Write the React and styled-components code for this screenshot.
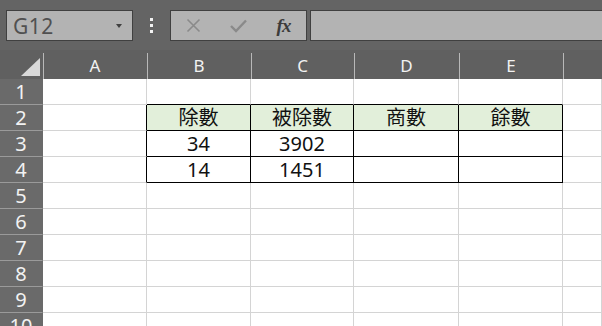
import React from "react";
import styled, { createGlobalStyle } from "styled-components";

const GlobalStyle = createGlobalStyle`
  html, body {
    margin: 0;
    padding: 0;
    background: #646464;
    overflow: hidden;
  }
`;

const COLS = ["A", "B", "C", "D", "E", ""];
const WIDTHS = "43px 104px 104px 103px 105px 104px 1fr";

const rows = [
  [],
  ["", "除數", "被除數", "商數", "餘數"],
  ["", "34", "3902", "", ""],
  ["", "14", "1451", "", ""],
  [], [], [], [], [], [],
];

const Page = styled.div`
  width: 602px;
  height: 326px;
  overflow: hidden;
  background: #646464;
  font-family: "Noto Sans", "Noto Sans CJK TC", sans-serif;
`;

const Toolbar = styled.div`
  height: 50px;
  display: flex;
  align-items: flex-start;
  padding: 10px 0 0 6px;
  box-sizing: border-box;
`;

const Box = styled.div`
  height: 31px;
  box-sizing: border-box;
  background: #b3b3b3;
  border: 1px solid #404040;
  display: flex;
  align-items: center;
`;

const NameBox = styled(Box)`
  width: 127px;
  padding: 0 10px 0 6px;
  justify-content: space-between;
  font-size: 21px;
  letter-spacing: 0.5px;
  color: #505050;
`;

const Caret = styled.span`
  width: 0;
  height: 0;
  border-left: 3.5px solid transparent;
  border-right: 3.5px solid transparent;
  border-top: 4px solid #404040;
`;

const Dots = styled.div`
  width: 37px;
  height: 31px;
  display: flex;
  flex-direction: column;
  align-items: center;
  justify-content: center;
  gap: 3px;
  span {
    width: 3px;
    height: 3px;
    background: #f2f2f2;
  }
`;

const FxBox = styled(Box)`
  width: 137px;
  padding: 0;
`;

const FxButton = styled.div`
  width: 45px;
  display: flex;
  justify-content: center;
  align-items: center;
`;

const FxLabel = styled.span`
  font-family: "Liberation Serif", serif;
  font-style: italic;
  font-weight: bold;
  font-size: 19px;
  color: #3c3c3c;
  letter-spacing: -1px;
`;

const Formula = styled(Box)`
  flex: 1;
  margin-left: 3px;
  border-right: none;
`;

const Sheet = styled.div`
  display: grid;
  grid-template-columns: ${WIDTHS};
  grid-template-rows: 29px repeat(10, 26px);
`;

const Corner = styled.div`
  position: relative;
  background: #606060;
  &::after {
    content: "";
    position: absolute;
    right: 3px;
    bottom: 3px;
    width: 0;
    height: 0;
    border-left: 19px solid transparent;
    border-bottom: 18px solid #d9d9d9;
  }
`;

const ColHead = styled.div`
  position: relative;
  background: #606060;
  color: #f2f2f2;
  font-size: 17px;
  display: flex;
  align-items: center;
  justify-content: center;
  padding-top: 2px;
  box-sizing: border-box;
  &::before {
    content: "";
    position: absolute;
    left: 0;
    top: 3px;
    bottom: 0;
    width: 1px;
    background: #b8b8b8;
  }
`;

const RowHead = styled.div`
  background: #6a6a6a;
  color: #f2f2f2;
  font-size: 20px;
  display: flex;
  align-items: center;
  justify-content: center;
  box-sizing: border-box;
  border-bottom: 1px solid #9a9a9a;
  border-right: 1px solid #6a6a6a;
`;

const Cell = styled.div`
  box-sizing: border-box;
  background: ${(p) => (p.$head ? "#e2efda" : "#ffffff")};
  border-right: 1px solid ${(p) => (p.$darkR ? "#000" : "#d4d4d4")};
  border-bottom: 1px solid ${(p) => (p.$darkB ? "#000" : "#d4d4d4")};
  color: #111;
  font-size: 20px;
  line-height: 1;
  display: flex;
  align-items: center;
  justify-content: center;
  padding-top: 1px;
`;

const inTable = (r, c) => r >= 1 && r <= 3 && c >= 1 && c <= 4;

export default function App() {
  return (
    <Page>
      <GlobalStyle />
      <Toolbar>
        <NameBox>
          G12
          <Caret />
        </NameBox>
        <Dots>
          <span />
          <span />
          <span />
        </Dots>
        <FxBox>
          <FxButton>
            <svg width="15" height="15" viewBox="0 0 15 15">
              <path d="M1.5 1.5 L13.5 13.5 M13.5 1.5 L1.5 13.5" stroke="#8a8a8a" strokeWidth="1.6" />
            </svg>
          </FxButton>
          <FxButton>
            <svg width="17" height="14" viewBox="0 0 17 14">
              <path d="M1 7 L6 12 L16 1.5" stroke="#8a8a8a" strokeWidth="2.4" fill="none" />
            </svg>
          </FxButton>
          <FxButton>
            <FxLabel>fx</FxLabel>
          </FxButton>
        </FxBox>
        <Formula />
      </Toolbar>
      <Sheet>
        <Corner />
        {COLS.map((c, i) => (
          <ColHead key={i}>{c}</ColHead>
        ))}
        {rows.map((row, r) => (
          <React.Fragment key={r}>
            <RowHead>{r + 1}</RowHead>
            {COLS.map((_, c) => (
              <Cell
                key={c}
                $head={r === 1 && c >= 1 && c <= 4}
                $darkR={inTable(r, c) || inTable(r, c + 1)}
                $darkB={inTable(r, c) || inTable(r + 1, c)}
              >
                {row[c] || ""}
              </Cell>
            ))}
          </React.Fragment>
        ))}
      </Sheet>
    </Page>
  );
}
